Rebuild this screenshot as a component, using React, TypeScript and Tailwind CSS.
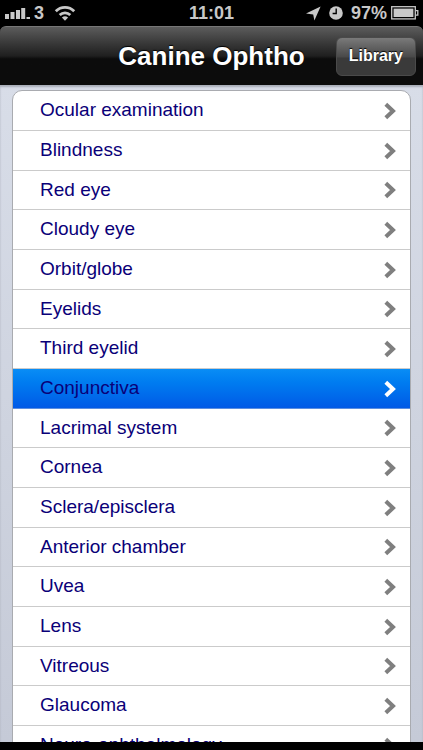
import React from 'react';

const topics = [
  'Ocular examination',
  'Blindness',
  'Red eye',
  'Cloudy eye',
  'Orbit/globe',
  'Eyelids',
  'Third eyelid',
  'Conjunctiva',
  'Lacrimal system',
  'Cornea',
  'Sclera/episclera',
  'Anterior chamber',
  'Uvea',
  'Lens',
  'Vitreous',
  'Glaucoma',
  'Neuro-ophthalmology',
];

const selectedTopic = 'Conjunctiva';

const StatusBar: React.FC = () => (
  <div className="grid h-[26px] shrink-0 grid-cols-[1fr_auto_1fr] items-center bg-black px-1 text-lg leading-none font-bold text-[#c8c8c8]">
    <div className="flex items-center">
      {/* Signal strength */}
      <svg width="26" height="12" viewBox="0 0 26 12" fill="currentColor" aria-hidden="true">
        <rect x="1" y="7" width="4" height="5" />
        <rect x="6.5" y="5" width="4" height="7" />
        <rect x="12" y="3" width="4" height="9" />
        <rect x="17.2" y="1" width="4" height="11" />
        <rect x="22.5" y="10" width="3.5" height="2" />
      </svg>
      <span className="ml-1">3</span>
      <svg className="ml-2.5" width="22" height="16" viewBox="0 0 22 16" aria-hidden="true">
        <path d="M1.8 6.2a13 13 0 0 1 18.4 0M5.7 10a7.6 7.6 0 0 1 10.6 0" fill="none" stroke="currentColor" strokeWidth="2.8" />
        <path d="M11 15.8 7.9 12.6a4.5 4.5 0 0 1 6.2 0z" fill="currentColor" />
      </svg>
    </div>
    <span>11:01</span>
    <div className="flex items-center justify-end">
      <svg width="15" height="15" viewBox="0 0 15 15" fill="currentColor" aria-hidden="true">
        <path d="M14.6.4 8.4 14.6 7.2 8.4 0 7.4z" />
      </svg>
      <svg className="ml-2" width="14" height="14" viewBox="0 0 14 14" aria-hidden="true">
        <circle cx="7" cy="7" r="6.8" fill="currentColor" />
        <path d="M7.2 2.6v4.9H3.6" fill="none" stroke="#000" strokeWidth="1.4" />
      </svg>
      <span className="ml-2">97%</span>
      <svg className="ml-1" width="28" height="14" viewBox="0 0 28 14" aria-hidden="true">
        <rect x="0.7" y="0.7" width="23.6" height="12.2" fill="none" stroke="currentColor" strokeWidth="1.3" />
        <rect x="2.6" y="2.6" width="19.8" height="8.4" fill="currentColor" />
        <path d="M24.6 4.6h2.2v4.6h-2.2" fill="none" stroke="currentColor" strokeWidth="1.3" />
      </svg>
    </div>
  </div>
);

const Chevron: React.FC<{ className: string }> = ({ className }) => (
  <svg className={className} width="12" height="18" viewBox="0 0 12 18" aria-hidden="true">
    <path d="M1.8 2.2 9 9l-7.2 6.8" fill="none" stroke="currentColor" strokeWidth="4" />
  </svg>
);

export default function App() {
  return (
    <div className="flex h-screen flex-col overflow-hidden bg-black font-['Liberation_Sans',Arial,sans-serif]">
      <StatusBar />

      {/* Navigation bar */}
      <header className="grid shrink-0 grid-cols-[1fr_auto_1fr] items-center rounded-t-md border-t border-[#777] bg-linear-to-b from-[#5c5c5c] from-0% via-[#1f1f1f] via-50% to-[#0c0c0c] to-55% px-[7px] py-[9px]">
        <h1 className="col-start-2 text-[26px] leading-10 font-bold whitespace-nowrap text-white [text-shadow:0_-1px_1px_#000]">
          Canine Ophtho
        </h1>
        <button
          type="button"
          className="h-[39px] justify-self-end rounded-md border border-[#4a4a4a] bg-linear-to-b from-[#7a7a7a] from-0% via-[#4a4a4a] via-50% to-[#3a3a3a] to-55% px-3 text-base font-bold text-white [text-shadow:0_-1px_1px_#000]"
        >
          Library
        </button>
      </header>

      {/* Topic list */}
      <main className="flex-1 overflow-hidden bg-linear-to-b from-[#d8dde8] to-[#c5cad7] px-3 pt-[5px] shadow-[inset_0_2px_2px_#a9adb8]">
        <ul className="overflow-hidden rounded-[10px] border border-[#a9abb0] bg-white">
          {topics.map((topic) => {
            const selected = topic === selectedTopic;
            return (
              <li
                key={topic}
                className={`h-10 border-b nth-[3n]:h-[39px] ${
                  selected
                    ? 'border-[#5c8ee0] bg-linear-to-b from-[#0a8df5] to-[#0259e6]'
                    : 'border-[#cbcbcb]'
                }`}
              >
                <a
                  href="#"
                  aria-current={selected ? 'true' : undefined}
                  className="flex h-full items-center justify-between pr-3.5 pl-[27px] text-[19px] text-[#0a0078]"
                >
                  {topic}
                  <Chevron className={selected ? 'text-white' : 'text-[#7f7f7f]'} />
                </a>
              </li>
            );
          })}
        </ul>
      </main>

      <footer className="h-2 shrink-0 bg-black" />
    </div>
  );
}
